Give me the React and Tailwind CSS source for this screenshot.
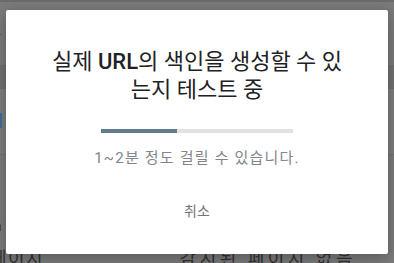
export default function App() {
  const font = { fontFamily: 'Roboto, "Noto Sans CJK KR", sans-serif' };
  return (
    <div
      className="relative w-[394px] h-[263px] overflow-hidden bg-[#7c7c7c] flex flex-col"
      style={font}
    >
      {/* dimmed page behind the dialog */}
      <div className="h-[2px] bg-[#6b6b6b]" />
      <div className="h-[63px] bg-[#7b7b7b] pt-[24px]">
        <span className="block -ml-[11px] text-[14px] leading-[16px] text-[#5c5c5c]">를</span>
      </div>
      <div className="h-px bg-[#6e6e6e]" />
      <div className="h-[22px] bg-[#727272]" />
      <div className="h-px bg-[#6e6e6e]" />
      <div className="h-[65px] bg-[#7e7e7e] pt-[24px]">
        <div className="w-[2px] h-[15px] bg-[#3f6e9e]" />
      </div>
      <div className="h-px bg-[#727272]" />
      <div className="flex-1 bg-[#7c7c7c] flex flex-col">
        <span className="mt-[63px] -ml-[6px] text-[14px] leading-[16px] text-[#3a3a3a]">a</span>
        <div className="mt-auto flex justify-between pr-[38px] text-[18px] leading-[14px] h-[11px] text-[#333]">
          <span className="-ml-[10px] tracking-[1.5px]">페이지</span>
          <span className="tracking-[3.5px]">감시된 페이지 없음</span>
        </div>
      </div>

      {/* dialog */}
      <div className="absolute left-[6px] top-[10px] w-[382px] h-[244px] bg-white rounded-[2px] shadow-[0_4px_16px_rgba(0,0,0,0.3)] flex flex-col items-center">
        <h1 className="mt-[38px] w-[302px] text-center text-[22px] leading-[28px] font-normal text-[#202124]">
          실제 <b className="font-medium">URL</b>의 색인을 생성할 수 있는지 테스트 중
        </h1>
        <div className="mt-[25px] w-[192px] h-[4px] bg-[#e2e2e2]">
          <div className="w-[76px] h-full bg-[#607d8b]" />
        </div>
        <p className="mt-[15px] text-[15px] leading-[20px] tracking-[1.2px] text-[#80868b]">
          1~2분 정도 걸릴 수 있습니다.
        </p>
        <button className="mt-[33px] px-2 h-[20px] text-[14px] leading-[20px] text-[#757575]">
          취소
        </button>
      </div>
    </div>
  );
}
